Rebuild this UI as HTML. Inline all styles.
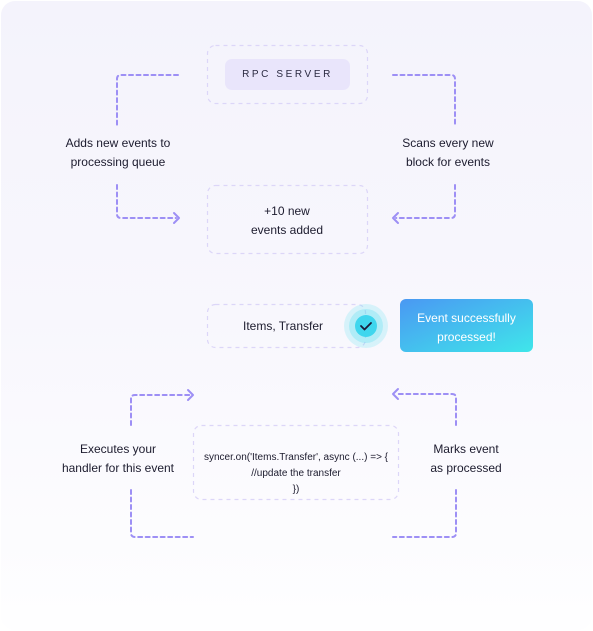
<!DOCTYPE html>
<html><head><style>
html,body{margin:0;padding:0;width:593px;height:631px;background:#fff;overflow:hidden}
.panel{position:absolute;left:1px;top:1px;width:591px;height:629px;border-radius:14px;background:linear-gradient(180deg,#f4f3fc 0%,#f8f7fd 50%,#fefeff 100%)}
.t{position:absolute;font-family:"Liberation Sans",sans-serif;color:#1c1b2e;text-align:center;font-size:12px;line-height:19px;white-space:nowrap}
svg{position:absolute;left:0;top:0}
</style></head><body>
<div class="panel"></div>
<svg width="593" height="631" fill="none">
<g stroke="#dcd6f8" stroke-width="1.2" stroke-dasharray="4 4">
<rect x="207.5" y="45.5" width="160" height="58" rx="8"/>
<rect x="207.5" y="185.5" width="160" height="68" rx="8"/>
<rect x="207.5" y="304.5" width="158" height="43" rx="8"/>
<rect x="193.5" y="425.5" width="205" height="74" rx="8"/>
</g>
<rect x="225" y="59" width="125" height="31" rx="7" fill="#e9e5fb"/>
<g stroke="#9d8ff5" stroke-width="2" stroke-dasharray="4 3.5" stroke-linecap="round">
<path d="M178 75 H121 Q117 75 117 79 V125"/>
<path d="M117 185 V214 Q117 218 121 218 H176"/>
<path d="M393 75 H451 Q455 75 455 79 V125"/>
<path d="M455 185 V214 Q455 218 451 218 H396"/>
<path d="M131 425 V399 Q131 395 135 395 H190"/>
<path d="M131 490 V533 Q131 537 135 537 H193"/>
<path d="M456 425 V398 Q456 394 452 394 H396"/>
<path d="M456 490 V533 Q456 537 452 537 H393"/>
</g>
<g stroke="#9d8ff5" stroke-width="2" stroke-linecap="round" stroke-linejoin="round">
<path d="M174 213 L179 218 L174 223"/>
<path d="M398 213 L393 218 L398 223"/>
<path d="M188 390 L193 395 L188 400"/>
<path d="M398 389 L393 394 L398 399"/>
</g>
<circle cx="366" cy="326" r="22" fill="#3fdcef" opacity="0.18"/>
<circle cx="366" cy="326" r="17" fill="#3fdcef" opacity="0.25"/>
<circle cx="366" cy="326" r="11" fill="#3fd6ee"/>
<path d="M361 326 L364.5 329.5 L371 323" stroke="#1c1b3a" stroke-width="1.8" fill="none" stroke-linecap="round" stroke-linejoin="round"/>
<defs><linearGradient id="g" x1="0" y1="0" x2="1" y2="1"><stop offset="0" stop-color="#4a98f3"/><stop offset="1" stop-color="#3fe6ea"/></linearGradient></defs>
<rect x="400" y="299" width="133" height="53" rx="6" fill="url(#g)"/>
</svg>
<div class="t" style="left:225px;top:65px;width:125px;font-size:10px;letter-spacing:2.6px;color:#2a2940">RPC SERVER</div>
<div class="t" style="left:38px;top:134px;width:160px">Adds new events to<br>processing queue</div>
<div class="t" style="left:368px;top:134px;width:160px">Scans every new<br>block for events</div>
<div class="t" style="left:207px;top:202px;width:160px">+10 new<br>events added</div>
<div class="t" style="left:205px;top:317px;width:156px">Items, Transfer</div>
<div class="t" style="left:400px;top:309px;width:133px;color:#fff">Event successfully<br>processed!</div>
<div class="t" style="left:38px;top:440px;width:160px">Executes your<br>handler for this event</div>
<div class="t" style="left:386px;top:440px;width:160px">Marks event<br>as processed</div>
<div class="t" style="left:193px;top:450px;width:206px;font-size:10px;line-height:16px">syncer.on('Items.Transfer', async (...) =&gt; {<br>//update the transfer<br>})</div>
</body></html>
